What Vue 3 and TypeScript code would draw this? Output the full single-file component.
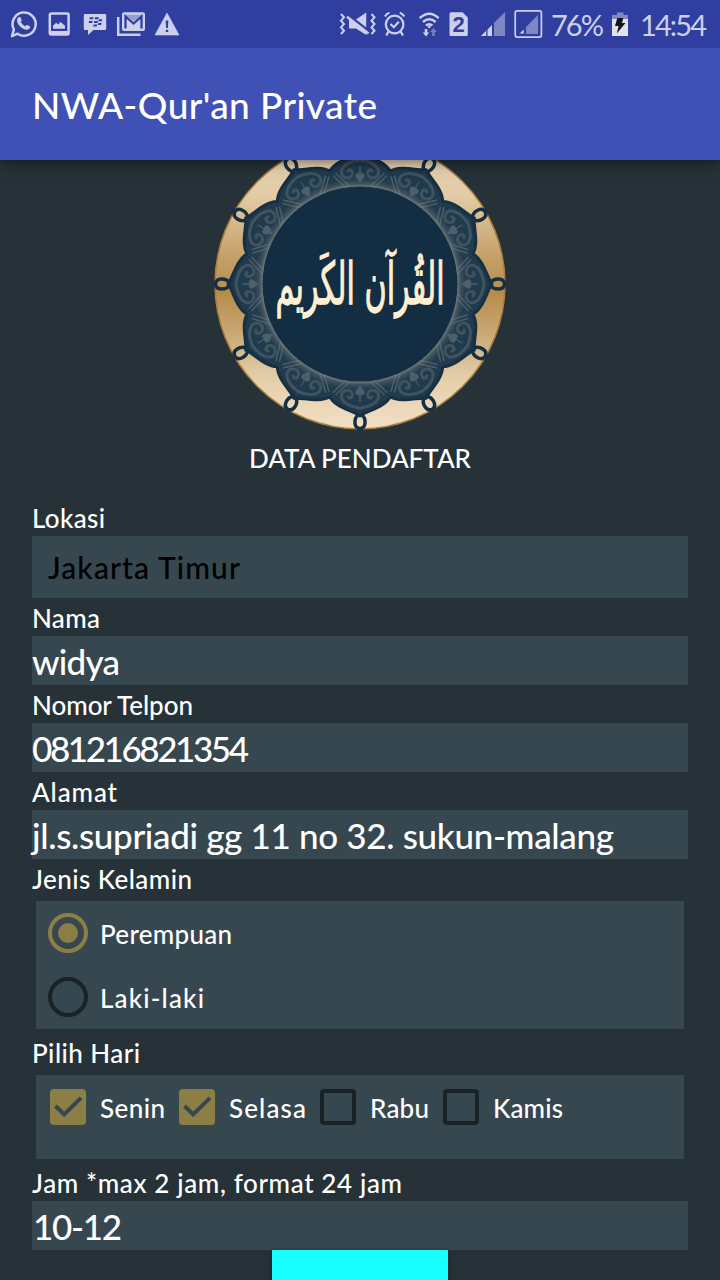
<script setup lang="ts">
interface TextItem {
  text: string
  width: number
}
interface Choice extends TextItem {
  checked: boolean
}
interface Field {
  label: TextItem
  value: TextItem
}

const location: Field = {
  label: { text: 'Lokasi', width: 73 },
  value: { text: 'Jakarta Timur', width: 192 },
}
const fields: Field[] = [
  { label: { text: 'Nama', width: 68 }, value: { text: 'widya', width: 88 } },
  { label: { text: 'Nomor Telpon', width: 161 }, value: { text: '081216821354', width: 217 } },
  { label: { text: 'Alamat', width: 85 }, value: { text: 'jl.s.supriadi gg 11 no 32. sukun-malang', width: 582 } },
]
const genders: Choice[] = [
  { text: 'Perempuan', width: 132, checked: true },
  { text: 'Laki-laki', width: 104, checked: false },
]
const days: Choice[] = [
  { text: 'Senin', width: 65, checked: true },
  { text: 'Selasa', width: 77, checked: true },
  { text: 'Rabu', width: 59, checked: false },
  { text: 'Kamis', width: 70, checked: false },
]
const hours: Field = {
  label: { text: 'Jam *max 2 jam, format 24 jam', width: 370 },
  value: { text: '10-12', width: 89 },
}

const turns = Array.from({ length: 12 }, (_, i) => i * 30)

function point(radius: number, degrees: number): string {
  const a = (degrees * Math.PI) / 180
  return `${(radius * Math.cos(a)).toFixed(2)} ${(radius * Math.sin(a)).toFixed(2)}`
}

// Twelve petals, each with a drawn-out tip and a full shoulder.
function rosette(tip: number, valley: number, shoulder: number): string {
  let d = `M${point(tip, 0)}`
  for (let k = 0; k < 12; k++) {
    const a = k * 30
    d += `C${point(shoulder + 1, a + 3)} ${point(shoulder, a + 11)} ${point(valley, a + 15)}`
    d += `C${point(shoulder, a + 19)} ${point(shoulder + 1, a + 27)} ${point(tip, a + 30)}`
  }
  return d + 'Z'
}

const outerRosette = rosette(132.5, 117.500, 126.500)
const innerRosette = rosette(128, 114, 122.500)

// Spreads the letters of a text so that it takes up the given width.
const vFit = {
  mounted(el: HTMLElement, binding: { value: number }) {
    const count = (el.textContent ?? '').length
    const natural = el.getBoundingClientRect().width
    el.style.letterSpacing = `${(binding.value - natural) / Math.max(1, count - 1)}px`
    el.style.width = `${binding.value}px`
  },
}
</script>

<template>
  <div class="screen">
    <header class="status">
      <svg class="status-left" viewBox="0 0 190 48" width="190" height="48">
        <g fill="none" stroke="#ccd0ea" stroke-width="2.5">
          <path d="M12 36.2 13.9 29.6A11.6 11.6 0 1 1 17.6 33.7Z" stroke-linejoin="round" />
          <rect x="49.8" y="13.6" width="18.8" height="21" rx="1.5" />
          <path d="M118.2 17V34.8H140.5" />
        </g>
        <g fill="#ccd0ea">
          <path d="M18.6 17.3c1.2-.8 1.9-.3 2.3.6l.8 2c.2.7-.3 1.2-1 1.9 1.1 2.200 2.700 3.600 4.700 4.500.8-1 1.300-1.600 2-1.300l2.400 1.200c.6.4.2 2.200-1 2.900-2.600 1.400-6-.1-8.400-2.400-2.600-2.500-5-6.700-1.800-9.400z" />
          <rect x="50" y="31" width="18.500" height="3.500" />
          <path d="M53 28.800v-3l3.200-3 2 1.700 2.300-2.500 4.500 3.800v3z" />
          <path d="M85 14h20a1.200 1.200 0 0 1 1.200 1.200v13.600a1.200 1.200 0 0 1-1.200 1.200H93.500L88 35v-5h-3a1.200 1.200 0 0 1-1.200-1.200V15.200A1.200 1.200 0 0 1 85 14z" />
          <rect x="122" y="12.300" width="23" height="18.700" rx="2" />
          <path d="M167 13 179 35H155z" stroke-linejoin="round" stroke="#ccd0ea" stroke-width=".6" />
        </g>
        <path d="M125.500 28.500V16.500L133.500 23.500 141.500 16.500V28.500" fill="none" stroke="#303f9f" stroke-width="2.300" />
        <path d="M124.500 14.800H142.500L133.500 21z" fill="#303f9f" opacity=".35" />
        <g fill="#303f9f">
          <path d="M89.800 17.300h3.700l-.4 2h-3.700zM95.100 17.300h3.700l-.4 2h-3.700zM89 21h3.700l-.4 2h-3.700zM94.300 21h3.700l-.4 2h-3.700zM98.800 19.200h3.400l-.4 2h-3.400zM98.200 23h3.400l-.4 2h-3.400zM93.600 24.600h3.600l-.4 2h-3.600z" />
          <path d="M165.600 20.500h2.800l-.5 7.500h-1.800zM165.800 29.700h2.400v2.300h-2.400z" />
        </g>
      </svg>

      <svg class="status-right" viewBox="336 0 212 48" width="212" height="48">
        <g fill="none" stroke="#ccd0ea" stroke-width="2">
          <path d="M341 14l3 3.300-3 3.400 3 3.300-3 3.400 3 3.300-3 3.300M371.500 14l3 3.300-3 3.400 3 3.300-3 3.400 3 3.300-3 3.300" />
          <circle cx="394.600" cy="24.500" r="8.800" stroke-width="2.200" />
          <path d="M390.500 24l3.300 3.200 5-5.400M385 16.500q1.500-3 4.500-3.700M404.200 16.500q-1.500-3-4.500-3.700M388.500 31.500l-2.200 4M400.700 31.500l2.200 4" stroke-width="2.200" />
          <path d="M419.700 18.200q9.500-8.800 19 0M423 22q6.300-5.600 12.600 0M426 25.500q3.200-2.600 6.400 0" stroke-width="2.400" />
        </g>
        <g fill="#ccd0ea">
          <path d="M349 19.500h7L366.200 12.500V35L356 28.500h-7z" />
          <circle cx="429.200" cy="26.800" r="1.400" />
          <path d="M424.700 29h2.600v3.500h2L426 36.500l-3.300-4h2z" />
          <path d="M432.200 36h2.600v-4h2L433.500 28l-3.300 4h2z" opacity=".45" />
          <path d="M451 12.200h11.500l5.300 5.300V34.500a1.500 1.500 0 0 1-1.500 1.500H451a1.500 1.500 0 0 1-1.500-1.500V13.700A1.500 1.500 0 0 1 451 12.200z" />
          <path d="M505 12V36H494V23z" opacity=".5" />
          <path d="M492 25V36H487.500V29.500zM486.200 30.500V36H481z" />
          <path d="M538 15V34H526V27z" opacity=".5" />
          <path d="M523.800 29.500V33.500H519.500z" />
        </g>
        <path d="M347.500 14.500 369.500 31.500" stroke="#303f9f" stroke-width="2.500" />
        <path d="M347 16.800 368.500 33.500" stroke="#ccd0ea" stroke-width="2.400" />
        <rect x="515.200" y="10.900" width="26.200" height="26.200" rx="2" fill="none" stroke="#ccd0ea" stroke-width="1.700" />
        <text x="458.500" y="32" text-anchor="middle" class="sim">2</text>
      </svg>
      <span class="percent"><span v-fit="53" class="fit">76%</span></span>
      <svg class="battery" viewBox="611 0 18 48" width="18" height="48">
        <path d="M617 12.500h6.500V15H628v4.500H612V15h5z" fill="#8089c5" />
        <rect x="612" y="19" width="16" height="17" fill="#e0e2f2" />
        <path d="M617.300 18h6l-1.300 5h3.500l-8.700 10.500 1.800-7.500H615z" fill="#15161c" />
      </svg>
      <span class="clock"><span v-fit="67" class="fit">14:54</span></span>
    </header>

    <div class="appbar"><span v-fit="345" class="fit">NWA-Qur'an Private</span></div>

    <main class="content">
      <svg class="logo" viewBox="-150 -124 300 278" width="300" height="278">
        <defs>
          <linearGradient id="gold" gradientUnits="userSpaceOnUse" x1="0" y1="-145" x2="0" y2="145">
            <stop offset="0" stop-color="#ecd9bc" />
            <stop offset=".2" stop-color="#e2caa5" />
            <stop offset=".4" stop-color="#c6a26a" />
            <stop offset=".53" stop-color="#b68c49" />
            <stop offset=".68" stop-color="#cbab78" />
            <stop offset=".82" stop-color="#e4cda9" />
            <stop offset="1" stop-color="#f1e0c6" />
          </linearGradient>
          <radialGradient id="glow" gradientUnits="userSpaceOnUse" cx="0" cy="0" r="107">
            <stop offset=".905" stop-color="#8f918b" stop-opacity=".85" />
            <stop offset=".94" stop-color="#6d7778" stop-opacity=".4" />
            <stop offset="1" stop-color="#4c5d66" stop-opacity="0" />
          </radialGradient>
        </defs>
        <circle r="145" fill="url(#gold)" stroke="#a9813d" stroke-width="1.500" />
        <path :d="outerRosette" fill="#1b3548" stroke="#152e42" stroke-width="2" />
        <path :d="innerRosette" fill="#203b4e" stroke="#263f50" stroke-width="1" />
        <g v-for="turn in turns" :key="turn" :transform="`rotate(${turn})`" fill="none">
          <g stroke="#40535f" stroke-width="3" stroke-linecap="round">
            <path d="M0 124C-8 123-16 120-18.500 114C-20 106.500-10.500 103.500-8 109C-6.500 113-9.500 115.500-12 113" />
            <path d="M0 124C8 123 16 120 18.500 114C20 106.500 10.500 103.500 8 109C6.500 113 9.500 115.500 12 113" />
          </g>
          <path d="M-24.500 111-10.500 98M-27 108.500-13 95.500M24.500 111 10.500 98M27 108.500 13 95.500" stroke="#4c5b61" stroke-width="1.700" />
          <path d="M0 102C1 104.500 5 106 4.200 109C3.500 111.500.8 111 0 109.800V118V109.800C-.8 111-3.500 111.500-4.200 109C-5 106-1 104.500 0 102Z" fill="#4d606a" stroke="#4d606a" stroke-width="1" />
          <path d="M-1.500 130.500C-6.500 134.500-6.500 144 0 144.600C6.500 144 6.500 134.500 1.500 130.500" stroke="#172f42" stroke-width="3.500" />
        </g>
        <circle r="107" fill="url(#glow)" />
        <circle r="97.500" fill="#132d43" />
        <text class="calligraphy" transform="translate(0 20) scale(.9 1.460)" textLength="188" lengthAdjust="spacingAndGlyphs">القُرآن الكَريم</text>
      </svg>

      <h1 class="heading"><span v-fit="222" class="fit">DATA PENDAFTAR</span></h1>

      <label class="label first"><span v-fit="location.label.width" class="fit">{{ location.label.text }}</span></label>
      <div class="select"><span v-fit="location.value.width" class="fit">{{ location.value.text }}</span></div>

      <template v-for="field in fields" :key="field.label.text">
        <label class="label"><span v-fit="field.label.width" class="fit">{{ field.label.text }}</span></label>
        <div class="input"><span v-fit="field.value.width" class="fit">{{ field.value.text }}</span></div>
      </template>

      <div class="label"><span v-fit="160" class="fit">Jenis Kelamin</span></div>
      <div class="group">
        <div v-for="gender in genders" :key="gender.text" class="radio-row">
          <span class="radio" :class="{ on: gender.checked }"></span>
          <span v-fit="gender.width" class="fit choice">{{ gender.text }}</span>
        </div>
      </div>

      <div class="label"><span v-fit="108" class="fit">Pilih Hari</span></div>
      <div class="group days">
        <div v-for="day in days" :key="day.text" class="day">
          <svg v-if="day.checked" class="box" viewBox="0 0 36 36" width="36" height="36">
            <rect width="36" height="36" rx="4" fill="#8b7f46" />
            <path d="M5.500 17 14.200 25.500 31 8.800" fill="none" stroke="#37474f" stroke-width="4" />
          </svg>
          <span v-else class="box empty"></span>
          <span v-fit="day.width" class="fit choice">{{ day.text }}</span>
        </div>
      </div>

      <label class="label"><span v-fit="hours.label.width" class="fit">{{ hours.label.text }}</span></label>
      <div class="input hours"><span v-fit="hours.value.width" class="fit">{{ hours.value.text }}</span></div>
      <div class="button"></div>
    </main>
  </div>
</template>

<style>
body {
  margin: 0;
  background: #263238;
}
</style>

<style scoped>
.screen {
  width: 720px;
  height: 1280px;
  overflow: hidden;
  display: flex;
  flex-direction: column;
  background: #263238;
  color: #fff;
  font-family: Lato, 'Open Sans', sans-serif;
  font-weight: 500;
  font-size: 26px;
}
.fit {
  display: inline-block;
  white-space: pre;
}
.status {
  flex: none;
  height: 48px;
  display: flex;
  position: relative;
  z-index: 2;
  background: #303f9f;
  color: #ccd0ea;
  font-size: 29px;
  font-weight: 400;
  line-height: 50px;
}
.status svg {
  display: block;
  flex: none;
}
.status-right {
  margin-left: 146px;
}
.sim {
  font: 700 22px 'Liberation Sans', sans-serif;
  fill: #303f9f;
}
.percent {
  margin-left: 3px;
  width: 60px;
}
.clock {
  margin-left: 11px;
}
.appbar {
  flex: none;
  height: 112px;
  padding-left: 32px;
  background: #3f51b5;
  box-shadow: 0 2px 8px rgba(0, 0, 0, 0.3), 0 4px 20px rgba(0, 0, 0, 0.22);
  font-size: 37px;
  line-height: 113px;
  position: relative;
  z-index: 1;
}
.content {
  padding: 0 32px;
  display: flex;
  flex-direction: column;
}
.logo {
  display: block;
  align-self: center;
}
.calligraphy {
  font-family: 'DejaVu Sans', sans-serif;
  font-size: 40px;
  fill: #ffefd2;
  stroke: #ffefd2;
  stroke-width: 0.9px;
  text-anchor: middle;
}
.heading {
  margin: 0;
  height: 38px;
  line-height: 41px;
  text-align: center;
  font-size: 26px;
  font-weight: 500;
}
.label {
  display: block;
  height: 38px;
  line-height: 40px;
}
.first {
  margin-top: 22px;
}
.select {
  height: 62px;
  line-height: 63px;
  padding-left: 16px;
  background: #37474f;
  color: #000;
  font-size: 30px;
}
.input {
  height: 49px;
  line-height: 51px;
  background: #37474f;
  font-size: 35px;
}
.hours {
  padding-left: 1px;
}
.group {
  margin: 4px;
  background: #37474f;
}
.choice {
  padding-top: 2px;
}
.radio-row {
  height: 64px;
  padding-left: 12px;
  display: flex;
  align-items: center;
  gap: 12px;
}
.radio {
  box-sizing: border-box;
  width: 40px;
  height: 40px;
  border: 4px solid #1a2226;
  border-radius: 50%;
  display: flex;
  align-items: center;
  justify-content: center;
}
.radio.on {
  border-color: #8b7f46;
}
.radio.on::after {
  content: '';
  width: 20px;
  height: 20px;
  border-radius: 50%;
  background: #8b7f46;
}
.days {
  height: 84px;
  padding-left: 14px;
  display: flex;
  gap: 14px;
}
.day {
  height: 64px;
  display: flex;
  align-items: center;
  gap: 14px;
}
.box {
  flex: none;
  box-sizing: border-box;
  width: 36px;
  height: 36px;
}
.empty {
  border: 4px solid #1a2226;
  border-radius: 4px;
}
.button {
  align-self: center;
  width: 176px;
  height: 40px;
  background: #18ffff;
  box-shadow: 0 1px 4px rgba(0, 0, 0, 0.5);
}
</style>
